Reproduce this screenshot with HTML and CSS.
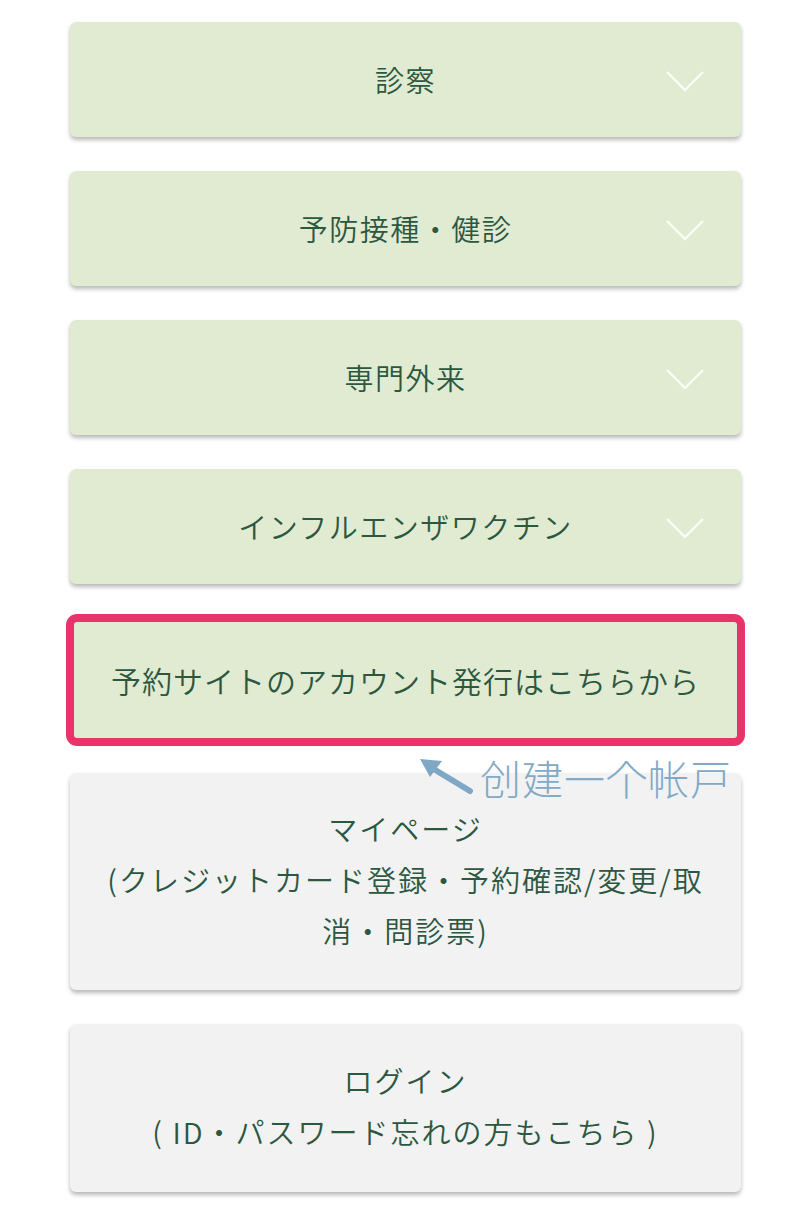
FILE: index.html
```html
<!DOCTYPE html>
<html lang="ja">
<head>
<meta charset="utf-8">
<link rel="stylesheet" href="styles.css">
</head>
<body>
<div class="list">
  <div class="card green"><span class="label">診察</span><svg class="chev" viewBox="0 0 40 24" width="40" height="24"><polyline points="2,3 20,21 38,3" fill="none" stroke="#fbfdf7" stroke-width="2.4"/></svg></div>
  <div class="card green"><span class="label">予防接種・健診</span><svg class="chev" viewBox="0 0 40 24" width="40" height="24"><polyline points="2,3 20,21 38,3" fill="none" stroke="#fbfdf7" stroke-width="2.4"/></svg></div>
  <div class="card green"><span class="label">専門外来</span><svg class="chev" viewBox="0 0 40 24" width="40" height="24"><polyline points="2,3 20,21 38,3" fill="none" stroke="#fbfdf7" stroke-width="2.4"/></svg></div>
  <div class="card green"><span class="label">インフルエンザワクチン</span><svg class="chev" viewBox="0 0 40 24" width="40" height="24"><polyline points="2,3 20,21 38,3" fill="none" stroke="#fbfdf7" stroke-width="2.4"/></svg></div>
  <div class="highlight-wrap">
    <div class="card green highlight"><span class="label">予約サイトのアカウント発行はこちらから</span></div>
    <div class="note">
      <svg class="arrow" viewBox="0 0 56 40" width="56" height="40"><line x1="52" y1="34" x2="14" y2="11" stroke="#7ea8c5" stroke-width="6" stroke-linecap="round"/><polygon points="2,2 24,4 12,20" fill="#7ea8c5"/></svg>
      <span class="note-text">创建一个帐戸</span>
    </div>
  </div>
  <div class="card gray mypage"><span class="label">マイページ<br>(クレジットカード登録・予約確認/変更/取<br>消・問診票)</span></div>
  <div class="card gray login"><span class="label">ログイン<br>( ID・パスワード忘れの方もこちら )</span></div>
</div>
</body>
</html>
```

FILE: styles.css
```css
html, body {
  margin: 0;
  padding: 0;
  background: #ffffff;
}
body {
  font-family: "Noto Sans CJK JP", "Noto Sans", sans-serif;
  color: #2c5741;
}
.list {
  width: 671px;
  margin-left: 70px;
  padding-top: 22px;
  padding-bottom: 20px;
  display: flex;
  flex-direction: column;
  gap: 34px;
}
.card {
  position: relative;
  display: flex;
  align-items: center;
  justify-content: center;
  border-radius: 6px;
  box-shadow: 0 3px 4px rgba(0, 0, 0, 0.28);
  box-sizing: border-box;
}
.green {
  background: #e0ebd2;
  height: 115px;
}
.gray {
  background: #f2f2f2;
}
.label {
  font-size: 29px;
  font-weight: 350;
  letter-spacing: 1.5px;
  line-height: 51px;
  text-align: center;
}
.gray .label {
  letter-spacing: 2px;
}
.chev {
  position: absolute;
  right: 36px;
  top: 47px;
}
.highlight-wrap {
  position: relative;
  margin: -4px -4px -7px -4px;
}
.highlight {
  height: 132px;
  border: 8px solid #e8336b;
  border-radius: 11px;
  box-shadow: none;
}
.highlight .label {
  font-size: 30px;
  letter-spacing: 1px;
}
.note {
  position: absolute;
  left: 352px;
  top: 139px;
  display: flex;
  align-items: flex-start;
  gap: 6px;
  z-index: 2;
}
.arrow {
  margin-top: 4px;
}
.note-text {
  font-family: "Noto Sans CJK SC", "Noto Sans CJK JP", sans-serif;
  font-size: 41px;
  line-height: 48px;
  color: #82aac6;
  font-weight: 300;
  letter-spacing: 1px;
}
.mypage {
  height: 217px;
  padding-bottom: 4px;
}
.login {
  height: 168px;
  padding-bottom: 4px;
}
```
